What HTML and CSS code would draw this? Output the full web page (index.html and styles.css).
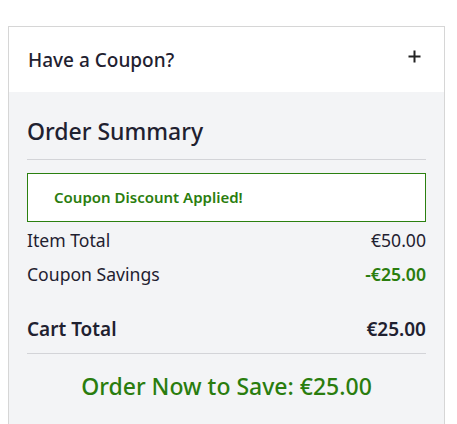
FILE: index.html
```html
<!DOCTYPE html>
<html lang="en">
<head>
<meta charset="utf-8">
<title>Cart</title>
<link rel="stylesheet" href="styles.css">
</head>
<body>
  <div class="cart-box">
    <div class="coupon-header">
      <span class="coupon-title">Have a Coupon?</span>
      <svg class="plus" width="13" height="13" viewBox="0 0 13 13" aria-hidden="true">
        <path d="M6.5 0.5v12M0.5 6.5h12" stroke="#222" stroke-width="2" fill="none"/>
      </svg>
    </div>
    <div class="summary">
      <h2 class="summary-title">Order Summary</h2>
      <div class="applied">Coupon Discount Applied!</div>
      <div class="row"><span>Item Total</span><span>€50.00</span></div>
      <div class="row"><span>Coupon Savings</span><span class="green-strong">-€25.00</span></div>
      <div class="row total"><span>Cart Total</span><span>€25.00</span></div>
      <div class="save">Order Now to Save: €25.00</div>
    </div>
  </div>
</body>
</html>
```

FILE: styles.css
```css
* { box-sizing: border-box; }
html, body { margin: 0; background: #fff; }
body {
  padding: 26px 8px 0 8px;
  font-family: "Noto Sans", "Open Sans", sans-serif;
  color: #1f2130;
}
.cart-box {
  width: 437px;
  border: 1px solid #d6d6d6;
  border-bottom: none;
}
.coupon-header {
  height: 65px;
  background: #fff;
  display: flex;
  align-items: center;
  justify-content: space-between;
  padding: 0 23px 0 19px;
}
.coupon-title {
  font-size: 19px;
  font-weight: 500;
}
.plus { margin-top: -6px; }
.summary {
  background: #f3f4f6;
  padding: 23px 18px 30px 18px;
}
.summary-title {
  margin: 0;
  font-size: 23px;
  font-weight: 500;
  line-height: 32px;
  padding-bottom: 12px;
  border-bottom: 1px solid #d3d4d8;
}
.applied {
  margin-top: 13px;
  height: 49px;
  border: 1px solid #2b8010;
  background: #fff;
  color: #2a7d0e;
  font-size: 15px;
  font-weight: 600;
  display: flex;
  align-items: center;
  padding: 0 26px 1px 26px;
}
.row {
  display: flex;
  justify-content: space-between;
  font-size: 17.6px;
  line-height: 24px;
  margin-top: 6px;
}
.row + .row { margin-top: 10px; }
.green-strong { color: #2a7d0e; font-weight: 600; }
.row.total {
  margin-top: 31px;
  font-size: 19px;
  font-weight: 600;
  padding-bottom: 12px;
  border-bottom: 1px solid #d3d4d8;
}
.save {
  text-align: center;
  color: #2a7d0e;
  font-size: 23px;
  font-weight: 500;
  line-height: 30px;
  margin-top: 17px;
}
```
